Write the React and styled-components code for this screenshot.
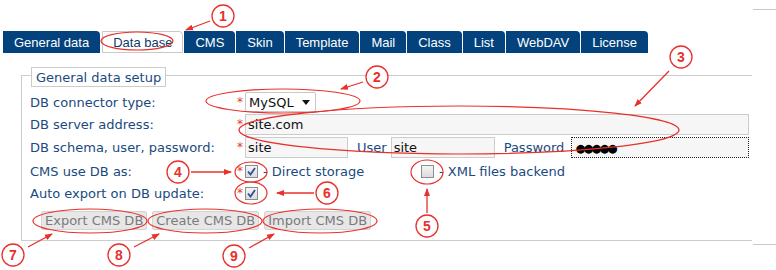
import React from 'react';
import styled, { createGlobalStyle } from 'styled-components';

const Global = createGlobalStyle`
    html, body {
        margin: 0;
        padding: 0;
        background: #ffffff;
    }
    body {
        font-family: "DejaVu Sans", Verdana, sans-serif;
        font-size: 13px;
    }
`

const Page = styled.div`
    position: relative;
    display: flex;
    width: 776px;
    height: 270px;
    overflow: hidden;
`
const Main = styled.div`
    width: 753px;
    display: flex;
    flex-direction: column;
`
const Side = styled.div`
    width: 23px;
    display: flex;
    flex-direction: column;
    padding-top: 9px;
`
const SideLine = styled.div`
    height: 1px;
    background: #c8c8c8;
    margin-top: ${p => p.$gap || 0}px;
`
const TabBar = styled.div`
    display: flex;
    gap: 1px;
    padding: 31px 0 0 3px;
    height: 22px;
`
const Tab = styled.div`
    box-sizing: border-box;
    height: 22px;
    padding: 0 ${p => p.$active ? 10 : 11}px;
    display: flex;
    align-items: center;
    font-family: "Liberation Sans", Arial, sans-serif;
    font-size: 13px;
    color: ${p => p.$active ? '#0d3a6b' : '#ffffff'};
    background: ${p => p.$active ? '#ffffff' : '#03427c'};
    border: ${p => p.$active ? '1px solid #c8c8c8' : 'none'};
    border-top-right-radius: 4px;
    margin: ${p => p.$active ? '0 0 0 1px' : '0'};
`
const Setup = styled.div`
    box-sizing: border-box;
    margin: 22px 0 0 21px;
    width: 731px;
    border: 1px solid #cccccc;
    border-right: none;
    padding: 0 3px 10px 8px;
    display: flex;
    flex-direction: column;
`
const Legend = styled.div`
    align-self: flex-start;
    box-sizing: border-box;
    height: 20px;
    margin: -9px 0 0 1px;
    padding: 0 4px;
    background: #ffffff;
    border: 1px solid #cccccc;
    color: #1a4a80;
    display: flex;
    align-items: center;
`
const Row = styled.div`
    display: grid;
    grid-template-columns: 205px 10px 1fr;
    align-items: center;
    height: ${p => p.$h}px;
    margin-top: ${p => p.$top || 0}px;
`
const Label = styled.div`
    color: #1a4a80;
    white-space: nowrap;
`
const Star = styled.span`
    color: #e53a2f;
    font-size: 12px;
    padding-left: 2px;
    margin-top: -1px;
`
const Fields = styled.div`
    display: flex;
    align-items: center;
`
const Select = styled.div`
    box-sizing: border-box;
    width: 71px;
    height: 20px;
    border: 1px solid #c8c8c8;
    border-radius: 2px;
    background: #ffffff;
    display: flex;
    align-items: center;
    justify-content: space-between;
    padding: 0 5px 0 3px;
    color: #111;
`
const Caret = styled.span`
    width: 0;
    height: 0;
    border-left: 4px solid transparent;
    border-right: 4px solid transparent;
    border-top: 5px solid #111;
`
const Field = styled.div`
    box-sizing: border-box;
    height: 21px;
    width: ${p => p.$w ? `${p.$w}px` : 'auto'};
    flex: ${p => p.$w ? 'none' : '1'};
    background: #f6f6f6;
    border: ${p => p.$focus ? '1px dotted #222' : '1px solid #cccccc'};
    padding: 0 2px;
    display: flex;
    align-items: center;
    color: #111;
    white-space: nowrap;
`
const Dots = styled.span`
    font-size: 11.5px;
    letter-spacing: -2px;
    color: #000;
    margin-left: 1px;
`
const SubLabel = styled.span`
    color: #1a4a80;
    margin: 0 ${p => p.$right}px 0 ${p => p.$left}px;
`
const Option = styled.div`
    display: flex;
    align-items: center;
    gap: 5px;
    width: ${p => p.$w ? `${p.$w}px` : 'auto'};
    color: #1a4a80;
    white-space: pre;
`
const Box = styled.span`
    box-sizing: border-box;
    width: 13px;
    height: 13px;
    border: 1px solid #8d8d8d;
    background: linear-gradient(#f4f4f4, #dcdcdc);
    display: inline-flex;
    align-items: center;
    justify-content: center;
`
const Buttons = styled.div`
    display: flex;
    gap: 5px;
    margin: 8px 0 0 11px;
`
const Button = styled.div`
    box-sizing: border-box;
    height: 19px;
    padding: 0 3px;
    background: #e7e7e7;
    border: 1px solid #d4d4d4;
    border-radius: 2px;
    color: #7a7a7a;
    display: flex;
    align-items: center;
    white-space: nowrap;
`
const Notes = styled.svg`
    position: absolute;
    left: 0;
    top: 0;
    pointer-events: none;
`

function Check({ on }) {
    return (
        <Box>
            {on && (
                <svg width="9" height="9" viewBox="0 0 9 9">
                    <path d="M1 4.5 L3.5 7.5 L8 1" fill="none" stroke="#2d4f94" strokeWidth="1.8" />
                </svg>
            )}
        </Box>
    )
}

const tabs = ['General data', 'Data base', 'CMS', 'Skin', 'Template', 'Mail', 'Class', 'List', 'WebDAV', 'License'];

const marks = [
    { n: 1, x: 223, y: 16, a: [210, 21, 186, 30] },
    { n: 2, x: 377, y: 77, a: [363, 82, 341, 89] },
    { n: 3, x: 681, y: 57, a: [669, 71, 635, 106] },
    { n: 4, x: 178, y: 172, a: [191, 172, 231, 172] },
    { n: 5, x: 427, y: 226, a: [427, 213, 427, 189] },
    { n: 6, x: 327, y: 193, a: [314, 193, 277, 193] },
    { n: 7, x: 13, y: 255, a: [28, 247, 52, 234] },
    { n: 8, x: 119, y: 255, a: [134, 247, 159, 234] },
    { n: 9, x: 234, y: 256, a: [249, 248, 274, 234] },
];

const rings = [
    [137, 41, 36, 9],
    [283, 101, 77, 12],
    [459, 130, 220, 24],
    [251, 172, 16, 10],
    [427, 172, 16, 12],
    [251, 193, 16, 11],
    [90, 221, 57, 12],
    [205, 221, 57, 12],
    [320, 221, 57, 12],
];

function Annotations() {
    const red = '#e8302c';
    return (
        <Notes width="776" height="270" viewBox="0 0 776 270">
            <defs>
                <marker id="head" markerWidth="8" markerHeight="8" refX="7" refY="4" orient="auto" markerUnits="userSpaceOnUse">
                    <path d="M0 1 L8 4 L0 7 Z" fill={red} />
                </marker>
            </defs>
            {rings.map(([cx, cy, rx, ry], i) => (
                <ellipse key={i} cx={cx} cy={cy} rx={rx} ry={ry} fill="none" stroke={red} strokeWidth="1.2" />
            ))}
            {marks.map(m => (
                <g key={m.n}>
                    <line x1={m.a[0]} y1={m.a[1]} x2={m.a[2]} y2={m.a[3]} stroke={red} strokeWidth="1.3" markerEnd="url(#head)" />
                    <circle cx={m.x} cy={m.y} r="11" fill="#fff" stroke={red} strokeWidth="1.3" />
                    <text x={m.x} y={m.y + 5} textAnchor="middle" fill={red} fontFamily="Liberation Sans, Arial, sans-serif" fontWeight="bold" fontSize="14">{m.n}</text>
                </g>
            ))}
        </Notes>
    )
}

export default function App() {
    return (
        <Page>
            <Global />
            <Main>
                <TabBar>
                    {tabs.map(t => (
                        <Tab key={t} $active={t === 'Data base'}>{t}</Tab>
                    ))}
                </TabBar>
                <Setup>
                    <Legend>General data setup</Legend>
                    <Row $h={22} $top={4}>
                        <Label>DB connector type:</Label>
                        <Star>*</Star>
                        <Fields>
                            <Select>MySQL <Caret /></Select>
                        </Fields>
                    </Row>
                    <Row $h={23}>
                        <Label>DB server address:</Label>
                        <Star>*</Star>
                        <Fields>
                            <Field>site.com</Field>
                        </Fields>
                    </Row>
                    <Row $h={23}>
                        <Label>DB schema, user, password:</Label>
                        <Star>*</Star>
                        <Fields>
                            <Field $w={103}>site</Field>
                            <SubLabel $left={9} $right={4}>User</SubLabel>
                            <Field $w={104}>site</Field>
                            <SubLabel $left={9} $right={7}>Password</SubLabel>
                            <Field $focus><Dots>●●●●●</Dots></Field>
                        </Fields>
                    </Row>
                    <Row $h={25}>
                        <Label>CMS use DB as:</Label>
                        <Star>*</Star>
                        <Fields>
                            <Option $w={176}><Check on /><span>- Direct storage</span></Option>
                            <Option><Check /><span>- XML files backend</span></Option>
                        </Fields>
                    </Row>
                    <Row $h={19}>
                        <Label>Auto export on DB update:</Label>
                        <Star>*</Star>
                        <Fields>
                            <Check on />
                        </Fields>
                    </Row>
                    <Buttons>
                        <Button>Export CMS DB</Button>
                        <Button>Create CMS DB</Button>
                        <Button>Import CMS DB</Button>
                    </Buttons>
                </Setup>
            </Main>
            <Side>
                <SideLine />
                <SideLine $gap={234} />
            </Side>
            <Annotations />
        </Page>
    )
}
